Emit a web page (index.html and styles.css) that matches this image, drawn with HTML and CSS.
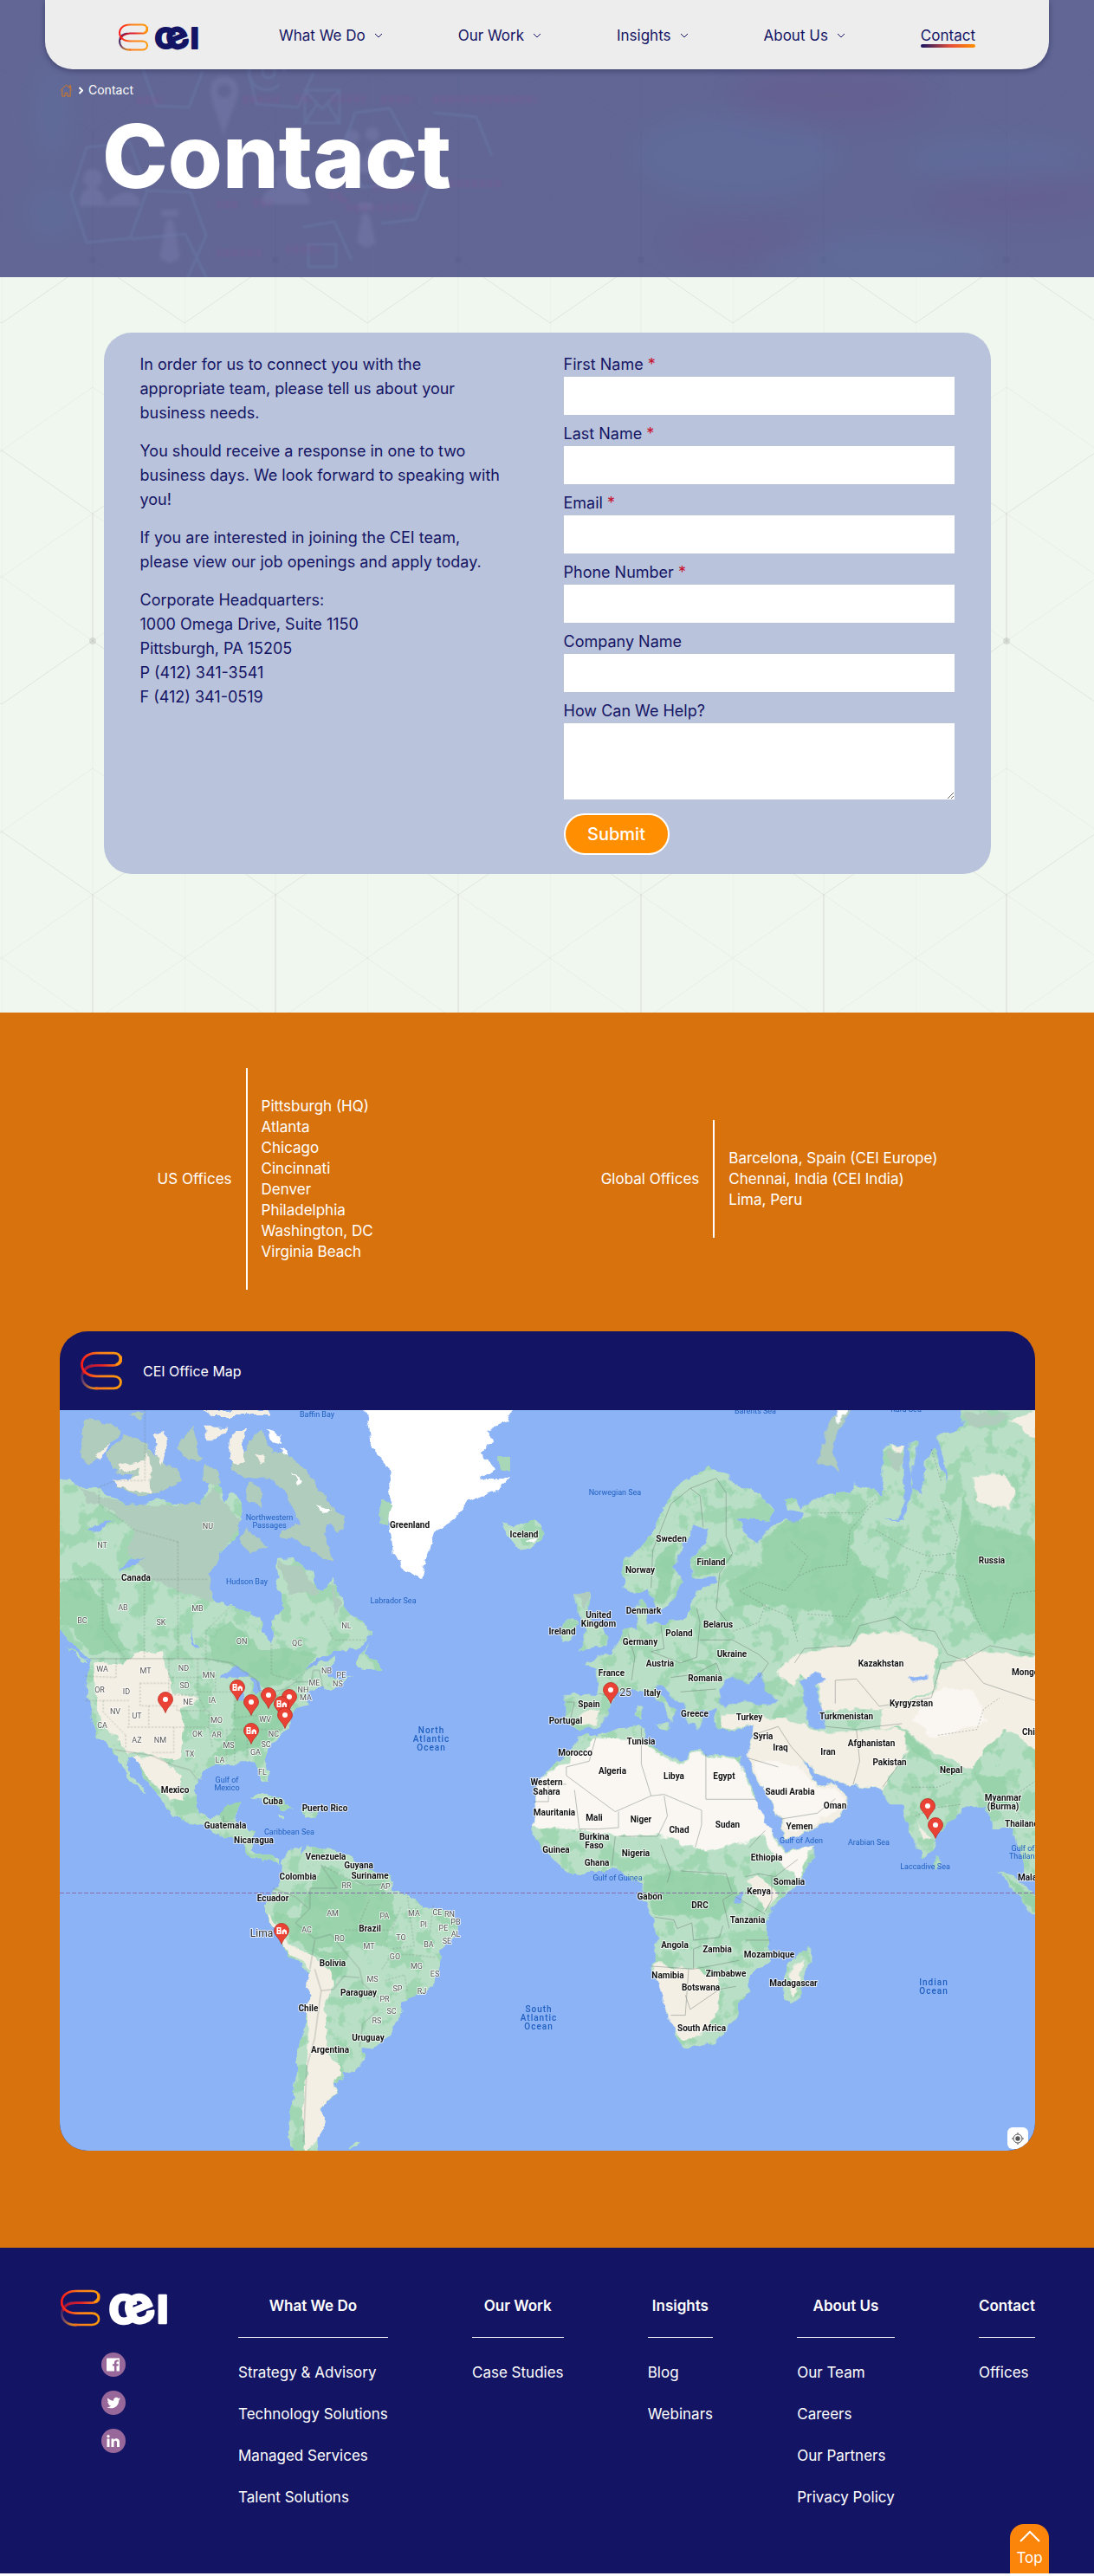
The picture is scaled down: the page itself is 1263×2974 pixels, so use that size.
FILE: index.html
```html
<!DOCTYPE html>
<html lang="en">
<head>
<meta charset="utf-8">
<meta name="viewport" content="width=device-width, initial-scale=1">
<title>Contact | CEI</title>
<link rel="stylesheet" href="styles.css">
</head>
<body>
<svg class="defs" width="0" height="0" aria-hidden="true">
  <defs>
    <linearGradient id="ribbon" x1="0" x2="1" y1="0" y2="0"><stop offset="0" stop-color="#ff1a1a"/><stop offset=".45" stop-color="#fb7d1c"/><stop offset="1" stop-color="#ff9a0a"/></linearGradient>
    <linearGradient id="ribbon-mid" x1="0" x2="1" y1="0" y2="0"><stop offset="0" stop-color="#a3123c"/><stop offset=".5" stop-color="#e3222b"/><stop offset="1" stop-color="#ff8a10"/></linearGradient>
    <linearGradient id="ribbon-tail" x1="0" x2="1" y1="0" y2="1"><stop offset="0" stop-color="#141464"/><stop offset=".4" stop-color="#6b3f6b"/><stop offset="1" stop-color="#ff9a0a"/></linearGradient>
    <symbol id="mark" viewBox="0 0 34 32">
      <g fill="none" stroke-width="2">
        <path stroke="url(#ribbon-tail)" d="M14 30.500C5 31 1 26 1 20C1 15 5 12 10 11.500"/>
        <path stroke="url(#ribbon-mid)" d="M2 19C3 13 8 12 13 11.600H27C34 11.500 34 6 32.500 4"/>
        <path stroke="url(#ribbon)" d="M29 11C34 9 34 1.500 27 1.500H13C-3 1.500 -3 20.500 13 20.500H27C35 20.500 35 30.500 27 30.500H12"/>
      </g>
    </symbol>
    <symbol id="chevron" viewBox="0 0 10 6"><path d="M1 1l4 4 4-4" fill="none" stroke="currentColor"/></symbol>
    <symbol id="pin" viewBox="0 0 18 25"><path d="M9 .5a8.500 8.500 0 0 0-8.500 8.500c0 5.500 6 8 8.500 15.500C11.500 17 17.500 14.500 17.500 9A8.500 8.500 0 0 0 9 .5z" fill="#ea4335" stroke="#b5251c" stroke-width=".7"/></symbol>
    <symbol id="pin-dot" viewBox="0 0 18 25"><use href="#pin"/><circle cx="9" cy="9" r="3" fill="#fff"/></symbol>
    <symbol id="pin-office" viewBox="0 0 18 25"><use href="#pin"/><path fill="#fff" fill-rule="evenodd" d="M3.500 5h5v8h-5zM5 6.500v1.500h2V6.500zM5 9.700v1.600h2V9.700zM9.500 9l2.700-2L15 9v4h-1.800v-2.500h-1.600V13H9.500z"/></symbol>
  </defs>
</svg>

<div class="upper">
  <header class="site-header">
    <a class="logo" href="#" aria-label="CEI home">
      <svg class="logo-svg" viewBox="0 0 94 32"><use href="#mark" width="34" height="32"/><text class="wordmark" x="41 60 82" y="29 33 29" rotate="0 -22 0">ceı</text></svg>
    </a>
    <nav class="main-nav" aria-label="Main">
      <a href="#">What We Do <svg class="chev"><use href="#chevron"/></svg></a>
      <a href="#">Our Work <svg class="chev"><use href="#chevron"/></svg></a>
      <a href="#">Insights <svg class="chev"><use href="#chevron"/></svg></a>
      <a href="#">About Us <svg class="chev"><use href="#chevron"/></svg></a>
      <a href="#" class="current" aria-current="page">Contact</a>
    </nav>
  </header>

  <div class="hero">
    <svg class="hero-art" viewBox="0 0 1263 320" preserveAspectRatio="xMinYMin slice" aria-hidden="true">
      <g class="glow"><ellipse cx="60" cy="130" rx="20" ry="60"/><ellipse cx="60" cy="245" rx="30" ry="32"/><ellipse cx="850" cy="180" rx="120" ry="50"/><ellipse cx="1150" cy="185" rx="110" ry="25"/><ellipse cx="1010" cy="300" rx="140" ry="30"/></g>
      <g class="glow-violet"><ellipse cx="960" cy="110" rx="120" ry="34"/><ellipse cx="860" cy="280" rx="90" ry="22"/><ellipse cx="1180" cy="230" rx="110" ry="26"/></g>
      <g class="ghost-line"><path d="M100 170l50-5 20 55-20 55-50 5-18-55zM152 276l62-6 24 50M170 220l50 2 18 50-22 50M165 80l15 42 38 2 16-42M286 80l10 40 48 4 18-40M410 130l40-5 24 44-16 44-40 3-22-46zM350 262l36-6 20 44M440 258l40-5 20-50M500 130l50 5 18 45"/><path d="M352 104h40v38h-40zM352 104l20 22 20-22M352 142l14-22M392 142l-14-22M356 282h32v26h-32z"/><path d="M322 98a20 20 0 1 1 6-14M310 76a7 7 0 1 0 0 14 7 7 0 0 0 0-14M317 76v12"/></g>
      <g class="ghost-fill"><path fill-rule="evenodd" d="M258 88a15 15 0 0 0-15 16c0 14 9 28 15 54 7-26 17-40 17-54a16 16 0 0 0-17-16zM259 97a8 8 0 1 1 0 16 8 8 0 0 1 0-16z"/><circle cx="107" cy="206" r="11"/><path d="M92 236c0-26 28-26 30 0 18-20 38-18 40 2H92z"/><circle cx="146" cy="200" r="9"/><circle cx="407" cy="158" r="8"/><circle cx="430" cy="155" r="8"/><path d="M390 200c2-40 28-36 30-8 2-32 26-30 30 8zM186 242h20v8h-20zM192 254h8l8 44-12 6-12-6zM414 234h16v8h-16zM418 246h8l8 36-12 4-10-6z"/><circle cx="330" cy="204" r="14"/><path d="M302 236c0-30 56-30 56 0z"/></g>
      <g class="ghost-code"><path d="M158 116h30M280 115h42M340 114h20M382 114h40M440 115h38M500 115h120M250 236h26M292 234h22M380 226h16v8M430 216h58M400 240h80M500 212h80M250 292h54M330 288h40"/></g>
    </svg>
    <nav class="crumbs" aria-label="Breadcrumb">
      <a href="#" aria-label="Home"><svg class="home" viewBox="0 0 16 16"><path d="M1 8L8 1l7 7M3 7v8h3.500v-4h3v4H13V7M12 4V2h1.500v3.500" fill="none" stroke="currentColor"/></svg></a>
      <svg class="sep" viewBox="0 0 6 9"><path d="M1.500 1L5 4.500 1.500 8" fill="none" stroke="currentColor" stroke-width="2"/></svg>
      <span>Contact</span>
    </nav>
    <h1>Contact</h1>
  </div>

  <main class="contact">
    <div class="card">
      <div class="intro">
        <p>In order for us to connect you with the appropriate team, please tell us about your business needs.</p>
        <p>You should receive a response in one to two business days. We look forward to speaking with you!</p>
        <p>If you are interested in joining the CEI team, please view our job openings and apply today.</p>
        <p>Corporate Headquarters:<br>1000 Omega Drive, Suite 1150<br>Pittsburgh, PA 15205<br>P (412) 341-3541<br>F (412) 341-0519</p>
      </div>
      <form class="form" action="#">
        <div class="field"><label for="first">First Name <span class="req">*</span></label><input id="first" type="text" required></div>
        <div class="field"><label for="last">Last Name <span class="req">*</span></label><input id="last" type="text" required></div>
        <div class="field"><label for="email">Email <span class="req">*</span></label><input id="email" type="email" required></div>
        <div class="field"><label for="phone">Phone Number <span class="req">*</span></label><input id="phone" type="tel" required></div>
        <div class="field"><label for="company">Company Name</label><input id="company" type="text"></div>
        <div class="field"><label for="help">How Can We Help?</label><textarea id="help"></textarea></div>
        <button class="submit" type="submit">Submit</button>
      </form>
    </div>
  </main>
</div>

<section class="offices">
  <div class="office-lists">
    <div class="office-group"><h2>US Offices</h2><ul><li>Pittsburgh (HQ)</li><li>Atlanta</li><li>Chicago</li><li>Cincinnati</li><li>Denver</li><li>Philadelphia</li><li>Washington, DC</li><li>Virginia Beach</li></ul></div>
    <div class="office-group"><h2>Global Offices</h2><ul><li>Barcelona, Spain (CEI Europe)</li><li>Chennai, India (CEI India)</li><li>Lima, Peru</li></ul></div>
  </div>

  <div class="map-card">
    <div class="map-head"><svg class="map-mark"><use href="#mark"/></svg><span>CEI Office Map</span></div>
    <div class="map-body">
    <svg class="map" viewBox="0 0 1126 855" role="img" aria-label="World map of CEI offices">
      <defs>
        <filter id="coast" x="-2%" y="-2%" width="104%" height="104%" color-interpolation-filters="sRGB">
          <feTurbulence type="fractalNoise" baseFrequency=".07" numOctaves="3" seed="4" result="n"/>
          <feDisplacementMap in="SourceGraphic" in2="n" scale="11" xChannelSelector="R" yChannelSelector="G"/>
        </filter>
        <filter id="terrain" x="-2%" y="-2%" width="104%" height="104%" color-interpolation-filters="sRGB">
          <feTurbulence type="fractalNoise" baseFrequency=".07" numOctaves="3" seed="4" result="n"/>
          <feDisplacementMap in="SourceGraphic" in2="n" scale="11" xChannelSelector="R" yChannelSelector="G" result="land"/>
          <feTurbulence type="fractalNoise" baseFrequency=".045" numOctaves="5" seed="9"/>
          <feColorMatrix values="0 0 0 0 .63  0 0 0 0 .84  0 0 0 0 .7  12 0 0 0 -6.200"/>
          <feComposite in2="land" operator="in" result="forest"/>
          <feMerge><feMergeNode in="land"/><feMergeNode in="forest"/></feMerge>
        </filter>
      </defs>
      <rect width="1126" height="856" fill="#8bb3f5"/>

      <g filter="url(#terrain)" fill="#b9e0c6">
        <g transform="translate(-9 -8) scale(.3699 .3333)">
          <path d="M0 270L60 255 75 290 120 290 150 300 190 330 230 355 290 350 340 330 400 355 470 350 490 280 520 270 540 340 560 300 585 340 590 400 570 430 585 450 560 480 520 530 490 590 488 640 515 690 560 700 650 745 655 795 683 835 695 800 690 750 722 715 720 670 698 645 710 605 700 540 750 533 790 570 812 590 820 640 840 655 862 630 877 600 895 650 915 710 960 755 992 790 990 820 950 850 880 860 830 885 790 925 830 905 880 880 885 895 850 920 862 945 900 960 935 945 880 990 855 1000 845 985 800 1000 790 1020 800 1045 765 1055 745 1085 730 1130 725 1145 685 1185 660 1225 678 1280 675 1315 655 1300 640 1260 625 1240 580 1240 560 1255 510 1250 470 1275 455 1300 445 1370 460 1420 490 1435 530 1430 545 1390 588 1382 575 1430 565 1465 610 1470 635 1480 630 1540 650 1570 690 1560 715 1580 710 1602 690 1584 665 1592 640 1580 605 1555 590 1520 540 1500 520 1490 480 1465 440 1455 370 1430 345 1385 325 1350 290 1300 255 1225 228 1220 250 1290 295 1355 270 1340 240 1300 225 1260 195 1200 145 1160 120 1070 105 1010 105 950 118 890 70 840 45 800 0 770z"/>
          <path d="M990 830L975 870 1020 900 1032 930 950 912 965 870zM50 845L112 895 95 893zM620 1372L650 1353 700 1370 752 1405 720 1407 680 1383zM780 1406L830 1410 825 1432 785 1436zM703 1428h26v10h-26zM1405 410L1430 430 1500 405 1540 450 1500 505 1450 500 1425 475z"/>
          <path d="M780 1525L770 1560 800 1530 830 1545 900 1555 930 1570 960 1610 1055 1640 1068 1690 1110 1705 1145 1735 1225 1755 1265 1790 1270 1830 1215 1890 1210 1960 1190 2020 1145 2050 1090 2080 1085 2130 1045 2195 1010 2240 960 2235 980 2275 960 2305 905 2310 910 2345 875 2350 888 2390 840 2440 860 2485 825 2540 830 2600 760 2600 740 2530 745 2450 760 2350 765 2250 790 2180 795 2100 805 1970 740 1920 700 1830 665 1770 665 1740 690 1690 715 1640 720 1590 735 1560z"/>
          <path d="M925 2580L945 2565 968 2563 950 2580z"/>
        </g>
        <g transform="translate(551 -8) scale(.37627 .3333)">
          <path d="M85 1010L190 1010 185 920 145 900 180 880 230 860 270 790 310 780 305 710 325 680 335 700 335 760 380 765 460 745 480 680 490 650 555 620 550 605 480 605 470 540 520 480 520 430 480 430 420 560 440 620 410 700 370 715 345 640 290 665 265 640 265 545 340 480 380 380 410 310 480 250 530 225 590 250 600 280 680 310 725 370 710 410 650 400 615 392 640 450 680 485 710 430 760 405 800 415 820 380 770 370 760 330 795 330 805 370 880 315 960 310 975 280 1030 300 1060 330 1055 200 1080 135 1130 150 1125 230 1130 340 1110 400 1060 405 1125 405 1150 320 1145 130 1165 130 1145 280 1185 320 1190 200 1220 160 1260 280 1250 180 1230 110 1310 85 1300 0 1560 0 1560 1660 1510 1640 1490 1600 1475 1520 1460 1470 1400 1470 1380 1400 1310 1400 1280 1440 1230 1490 1220 1540 1185 1580 1155 1510 1130 1440 1125 1390 1085 1390 1050 1330 940 1320 850 1270 815 1235 860 1325 915 1315 960 1370 935 1430 860 1470 760 1515 750 1450 700 1340 645 1240 650 1220 660 1150 665 1120 600 1135 560 1130 540 1100 550 1060 500 1060 510 1090 490 1130 460 1090 440 1040 380 970 360 970 370 1000 430 1060 410 1110 385 1040 320 990 290 990 240 1000 235 1040 190 1120 130 1135 90 1110z"/>
          <path d="M120 660L165 650 155 740 215 800 215 840 130 860 150 790 125 720zM75 830L70 790 95 745 125 755 115 820zM360 1105L405 1105 400 1135zM305 1050L322 1048 320 1095 306 1090zM830 1880L842 1920 805 2060 780 2080 755 2060 765 1940 800 1920zM1222 1560L1240 1590 1225 1612zM1415 1620L1460 1640 1560 1740 1560 1800 1490 1730z"/>
          <path d="M130 1150L185 1150 250 1125 335 1122 330 1180 400 1220 450 1240 470 1200 520 1215 600 1225 628 1222 620 1250 660 1330 690 1440 745 1525 760 1550 850 1530 850 1570 800 1660 720 1750 700 1800 715 1850 715 1930 645 1990 650 2040 615 2080 610 2130 550 2210 450 2232 430 2200 420 2150 395 2110 385 2040 350 1950 370 1880 355 1780 325 1720 320 1665 240 1610 100 1635 60 1590 10 1540-10 1500-15 1470-5 1400-8 1340 20 1290 50 1250 75 1230 115 1190z"/>
        </g>
      </g>

      <g filter="url(#coast)">
        <g transform="translate(-9 -8) scale(.3699 .3333)">
          <g fill="#93d0a6" opacity=".8"><path d="M24 620L90 600 170 700 200 800 250 860 120 870 60 780 24 760z"/><path d="M490 800L560 760 650 850 690 850 830 870 790 930 740 960 660 985 580 920 500 890z"/><path d="M570 1030L700 1000 740 1060 700 1160 620 1200 500 1230 560 1130z"/><path d="M770 1790L820 1640 850 1600 930 1650 1060 1700 1070 1790 1040 1880 900 1860 820 1900 750 1860 690 1760z"/><path d="M820 1900L930 1900 880 2010 865 1960z"/><path d="M545 1390L588 1382 570 1440 520 1450z"/></g>
          <g fill="#b0ccbc"><path d="M75 290L230 355 290 350 400 355 470 350 500 290 585 400 570 450 520 530 490 590 500 680 420 660 300 600 230 500 260 450 200 380 110 330z"/><path d="M705 545L780 570 830 660 740 660zM875 610L900 690 880 740z"/><path d="M560 225L600 160 630 110 655 95 690 170 740 180 800 240 830 300 880 360 915 400 900 450 870 420 850 440 880 550 830 530 790 490 760 475 705 465 720 440 770 420 750 360 720 310 690 260 600 260z"/><path d="M100 60L150 55 215 100 160 160 125 215 85 185zM170 170L230 110 290 140 330 180 380 230 405 270 350 300 280 320 205 290 250 250 185 230zM390 150L440 80 465 190 430 205zM470 200L520 240 520 280 470 275zM600 430L625 450 670 500 620 515 590 490zM235 45L290 24 270 55zM610 280L650 290 655 360 610 330z"/></g>
          <g fill="#f4efe5"><path d="M130 900L220 910 270 860 340 870 370 960 380 1010 470 1010 400 1060 410 1130 400 1230 380 1240 310 1220 230 1200 200 1160 150 1110 135 1000z"/><path d="M250 1225L330 1225 400 1290 410 1380 370 1370 320 1320z"/><path d="M195 260L270 260 300 170 310 310 210 290zM200 215L290 200 290 230 210 235zM315 110L355 95 350 180 340 215zM550 190L560 110 580 90 607 90 590 140 600 210 570 210zM480 80L545 80 520 130 485 130zM470 24L670 24 680 45 500 45zM630 170L670 180 660 210zM130 180L180 140 150 200z"/><path d="M805 1960L740 1910 700 1830 670 1770 690 1780 740 1870 810 1910 870 1960 875 2010 850 2100 860 2240 905 2330 875 2350 885 2390 840 2440 860 2485 820 2560 790 2600 780 2480 795 2300 800 2200 795 2100z"/></g>
          <g fill="#fff"><path d="M975 0L1000 150 1050 220 1060 330 1045 350 1055 420 1065 520 1095 580 1155 612 1170 540 1195 450 1230 420 1270 390 1300 340 1380 310 1425 262 1340 260 1390 230 1330 180 1380 130 1350 100 1420 60 1450 0z"/><path d="M670 95L715 110 720 135 685 125zM745 240L785 270 770 280zM710 150L740 180 725 185zM820 350L870 370 860 390zM1480 475L1515 462 1505 490z"/></g>
          <path fill="#a8d7b8" d="M1025 340L1058 350 1050 420 1025 420zM1395 180L1430 190 1430 240 1400 230z"/>
          <path fill="#8bb3f5" d="M520 950L570 915 620 935 610 950zM580 1030L590 970 600 980 595 1030zM615 950L645 960 650 1000 635 1010zM432 780L445 830 455 850 440 850zM205 580L250 540 290 530 240 575zM110 440L190 400 150 450z"/>
        </g>
        <g transform="translate(551 -8) scale(.37627 .3333)">
          <g fill="#93d0a6" opacity=".85"><path d="M690 470L760 410 900 390 980 420 960 500 1010 570 1100 640 1000 700 940 800 900 720 700 700 600 700 580 620 690 560z"/><path d="M1310 300L1340 420 1528 470 1560 780 1400 830 1310 700 1280 560z"/><path d="M480 540L560 490 600 530 560 590 480 600zM370 520L430 480 420 600 400 690 360 690zM420 880L540 900 550 930 500 910z"/><path d="M325 1640L440 1620 600 1640 620 1700 560 1790 370 1770 325 1710z"/><path d="M1340 1280L1440 1290 1440 1400 1380 1370zM1120 1120L1220 1230 1320 1290 1250 1280 1130 1190z"/><path d="M1430 1630L1560 1740 1560 1790 1490 1720z"/></g>
          <g fill="#f4efe5"><path d="M730 930L800 870 960 840 1000 800 1130 790 1230 850 1220 930 1210 1000 1060 1060 880 1060 860 980 810 930 790 980 740 950z"/><path d="M1240 930L1340 860 1560 880 1560 1220 1440 1130 1380 1190 1330 1270 1200 1200 1130 1120 1060 1130 1060 1060 1210 1010z"/><path d="M570 1075L740 1090 800 1110 880 1140 1060 1130 1130 1130 1130 1210 1060 1330 940 1320 850 1270 815 1235 860 1325 915 1315 960 1370 935 1430 860 1470 760 1515 750 1450 700 1340 645 1240 665 1120 570 1130z"/><path d="M1340 260L1420 240 1470 300 1450 370 1350 340zM1150 1390L1170 1470 1210 1500 1180 1520zM130 1075L190 1060 180 1110 130 1120zM1080 140L1130 150 1110 190zM1450 60L1528 30 1528 120z"/><path d="M355 1940L470 1960 560 1990 560 2100 500 2200 440 2200 395 2110z"/><path d="M680 1640L740 1700 705 1760 640 1650zM775 1960L820 1930 800 2040 780 2060z"/></g>
          <path fill="#faf7f2" d="M90 1240L180 1160 320 1165 325 1190 400 1230 450 1250 470 1210 600 1235 620 1250 680 1400 735 1520 760 1555 850 1530 800 1650 740 1590 690 1490 640 1520 520 1550 380 1500 250 1500 100 1475-15 1470-5 1400-8 1340 20 1290z"/>
          <path fill="#faf7f2" d="M660 1240L800 1250 860 1330 915 1330 950 1380 860 1455 770 1480 700 1340zM1240 980L1340 1000 1380 1100 1220 1160 1150 1100z"/>
          <path fill="#b0ccbc" d="M865 200L890 80 925 40 965 20 915 110 905 180 930 240zM1080 160L1130 190 1110 240 1080 220zM1310 30L1460 40 1400 80 1320 80zM120 660L165 650 150 720z"/>
          <path fill="#fff" d="M915 60L925 20 960 10 925 70z"/>
          <path fill="#8bb3f5" d="M560 1040L570 960 600 940 640 970 690 940 700 990 735 1020 720 1045 640 1035 580 1050zM805 960L860 930 890 950 850 980 870 1030 885 1070 885 1135 830 1115 825 1040zM1140 950L1200 935 1200 950 1150 965zM605 1700L632 1695 630 1730 605 1730z"/>
        </g>
      </g>

      <g class="border">
        <g transform="translate(-9 -8) scale(.3699 .3333)">
          <path d="M118 885H480L560 900 640 960 650 1010 730 990 760 965 810 965 815 925 835 925 845 985M195 1200L310 1220 380 1255 430 1270 455 1305M535 1430V1450L570 1450M840 1600L890 1680 840 1680 805 1680 805 1750 760 1800 820 1855 870 1840 930 1920 960 1960 970 2010 1020 2060M805 1960L820 1860M820 1960L840 2035 880 2030 910 1985 960 1990M840 2035L820 2200 795 2300 785 2560M1020 2100L970 2150 960 2230M690 1680L760 1710 800 1750M940 1650L980 1670 1060 1665"/>
          <path class="dash" d="M24 610H488M158 610V780L230 885M288 610V885M393 480V885M480 885V790L560 700M393 480L260 440 147 350 147 290 200 268H290V24M685 835V940L760 960 830 890M840 740L880 820H980M365 885V1010H460M365 950H460M455 885V1010L480 1065M275 970H365M275 970V1048H390V1065H490M105 945L200 950M200 885V950M105 1030H240M160 1030V1070L230 1150M240 1048V1122M302 1048V1122M235 1122H490M380 1122V1210H310M230 1150V1200M490 1065V1122L500 1190M510 940V1000H570M460 1000H510M570 1030V1090L650 1080M555 1130H720M545 1130V1240M570 1150V1240M610 1130V1230M840 1600L930 1650M960 1800L990 1720M915 1825H1060L1090 1740M1110 1710L1130 1880 1060 1890M1030 1960L1060 1910 1120 1910 1200 1920M1040 2000L1100 1980 1110 2040M1190 1740L1180 1830"/>
        </g>
        <g transform="translate(551 -8) scale(.37627 .3333)">
          <path d="M350 640L355 510 410 350 470 295 500 320 510 430M470 295L550 260 580 310 580 460 600 520 560 590 550 710 600 780M190 1005L240 1020M280 800L300 880 290 960M380 770L390 850 350 860 440 900 490 880 500 760 490 710M500 820L600 820 680 870 710 900 680 950M90 1035L115 1035 100 1105M410 950L480 940 550 900 570 960M440 1000L550 990M320 1125L320 1250 350 1360 240 1415 90 1290 90 1260 160 1240 180 1160M518 1215V1372H670M350 1360L390 1355 505 1410 505 1460 485 1540M250 1415V1470L190 1475 130 1475 115 1340M390 1360L400 1430 370 1500 250 1500M-10 1380H35V1320H90M230 1600L240 1500M400 1660L410 1620 380 1530M440 1620L580 1630 600 1700 570 1720 590 1820M360 1780L420 1790 430 1820 475 1800 480 1860 560 1850 570 1810M350 1950L480 1960 530 1950 620 1930M480 1960V1890L505 1880M465 1960L455 2120 410 2120M455 2050L470 2100 560 2030 610 2020M640 1640L680 1630 730 1640 800 1580M720 1640V1720L700 1760M610 1710L700 1770M640 1860H715M650 1540L700 1480M660 1150L740 1120 780 1190 820 1240M650 1230L740 1260M750 1440L860 1420 915 1370M885 1120L980 1130 1040 1120 1120 1110M980 1130L990 1240 970 1320M1060 1330L1130 1220M915 1040V960L980 955 1050 1050 1210 1020 1240 900 1310 890 1390 840 1528 870M1310 890L1370 970 1528 1030M790 900L820 850 960 840 990 770 1100 740 1150 780 1220 790 1260 870 1310 890"/>
          <path class="dash" d="M600 790L680 760 700 700 620 650 680 620 760 650 800 600 860 570 950 560 960 440 1030 350M870 380H990L1040 330M780 480L830 530 800 600M1040 440L1130 500 1200 530 1280 520 1290 460 1240 330M1210 160L1240 270M1030 600L1050 680 1160 640 1180 580 1310 600 1340 720 1370 800M830 730L950 740 990 660M690 700L780 740 800 830M1528 650L1460 660 1430 780M1230 1150L1350 1130 1370 1060 1420 1020M1150 1330L1230 1330 1270 1310M1160 1430L1230 1400 1300 1390M1540 1300L1450 1370 1500 1460"/>
        </g>
      </g>
      <path d="M0 557.500H1126" stroke="#8a6da8" stroke-dasharray="5 2"/>

      <g class="lbl">
        <text x="404" y="132">Greenland</text><text x="536" y="143">Iceland</text><text x="88" y="193">Canada</text><text x="133" y="438">Mexico</text><text x="246" y="451">Cuba</text><text x="306" y="459">Puerto Rico</text><text x="191" y="479">Guatemala</text><text x="224" y="496">Nicaragua</text><text x="307" y="515">Venezuela</text><text x="345" y="525">Guyana</text><text x="358" y="537">Suriname</text><text x="275" y="538">Colombia</text><text x="246" y="563">Ecuador</text><text x="358" y="598">Brazil</text><text x="315" y="638">Bolivia</text><text x="345" y="672">Paraguay</text><text x="287" y="690">Chile</text><text x="356" y="724">Uruguay</text><text x="312" y="738">Argentina</text>
        <text x="706" y="148">Sweden</text><text x="752" y="175">Finland</text><text x="670" y="184">Norway</text><text x="674" y="231">Denmark</text><text x="622" y="236">United</text><text x="622" y="246">Kingdom</text><text x="580" y="255">Ireland</text><text x="715" y="257">Poland</text><text x="760" y="247">Belarus</text><text x="670" y="267">Germany</text><text x="776" y="281">Ukraine</text><text x="693" y="292">Austria</text><text x="637" y="303">France</text><text x="745" y="309">Romania</text><text x="684" y="326">Italy</text><text x="611" y="339">Spain</text><text x="584" y="358">Portugal</text><text x="733" y="350">Greece</text><text x="796" y="354">Turkey</text><text x="812" y="376">Syria</text><text x="832" y="389">Iraq</text><text x="887" y="394">Iran</text><text x="671" y="382">Tunisia</text><text x="595" y="395">Morocco</text><text x="638" y="416">Algeria</text><text x="709" y="422">Libya</text><text x="767" y="422">Egypt</text><text x="948" y="292">Kazakhstan</text><text x="908" y="353">Turkmenistan</text><text x="983" y="338">Kyrgyzstan</text><text x="937" y="384">Afghanistan</text><text x="958" y="406">Pakistan</text><text x="1029" y="415">Nepal</text><text x="1076" y="173">Russia</text>
        <text x="562" y="429">Western</text><text x="562" y="440">Sahara</text><text x="571" y="464">Mauritania</text><text x="617" y="470">Mali</text><text x="671" y="472">Niger</text><text x="715" y="484">Chad</text><text x="771" y="478">Sudan</text><text x="843" y="440">Saudi Arabia</text><text x="895" y="456">Oman</text><text x="854" y="480">Yemen</text><text x="617" y="492">Burkina</text><text x="617" y="502">Faso</text><text x="573" y="507">Guinea</text><text x="620" y="522">Ghana</text><text x="665" y="511">Nigeria</text><text x="816" y="516">Ethiopia</text><text x="842" y="544">Somalia</text><text x="807" y="555">Kenya</text><text x="681" y="561">Gabon</text><text x="739" y="571">DRC</text><text x="794" y="588">Tanzania</text><text x="710" y="617">Angola</text><text x="759" y="622">Zambia</text><text x="819" y="628">Mozambique</text><text x="769" y="650">Zimbabwe</text><text x="702" y="652">Namibia</text><text x="740" y="666">Botswana</text><text x="847" y="661">Madagascar</text><text x="741" y="713">South Africa</text><text x="1089" y="447">Myanmar</text><text x="1089" y="457">(Burma)</text>
        <g class="from-left"><text x="1099" y="302">Mongolia</text><text x="1111" y="371">China</text><text x="1091" y="477">Thailand</text><text x="1106" y="539">Malaysia</text></g>
      </g>
      <g class="lbl region">
        <text x="171" y="134">NU</text><text x="49" y="156">NT</text><text x="73" y="228">AB</text><text x="26" y="243">BC</text><text x="117" y="245">SK</text><text x="159" y="229">MB</text><text x="210" y="267">ON</text><text x="274" y="269">QC</text><text x="331" y="249">NL</text><text x="49" y="299">WA</text><text x="46" y="323">OR</text><text x="77" y="325">ID</text><text x="99" y="301">MT</text><text x="143" y="298">ND</text><text x="144" y="318">SD</text><text x="172" y="306">MN</text><text x="148" y="337">NE</text><text x="176" y="335">IA</text><text x="64" y="348">NV</text><text x="89" y="353">UT</text><text x="49" y="364">CA</text><text x="89" y="381">AZ</text><text x="116" y="381">NM</text><text x="159" y="374">OK</text><text x="181" y="375">AR</text><text x="181" y="358">MO</text><text x="195" y="387">MS</text><text x="150" y="397">TX</text><text x="185" y="404">LA</text><text x="226" y="395">GA</text><text x="238" y="386">SC</text><text x="247" y="374">NC</text><text x="237" y="357">WV</text><text x="234" y="418">FL</text><text x="294" y="315">ME</text><text x="308" y="301">NB</text><text x="325" y="306">PE</text><text x="321" y="316">NS</text><text x="281" y="323">NH</text><text x="284" y="332">MA</text>
        <text x="331" y="549">RR</text><text x="376" y="550">AP</text><text x="315" y="581">AM</text><text x="375" y="584">PA</text><text x="409" y="581">MA</text><text x="436" y="580">CE</text><text x="450" y="582">RN</text><text x="457" y="591">PB</text><text x="443" y="598">PE</text><text x="420" y="594">PI</text><text x="457" y="605">AL</text><text x="447" y="613">SE</text><text x="426" y="617">BA</text><text x="394" y="609">TO</text><text x="285" y="600">AC</text><text x="323" y="610">RO</text><text x="357" y="619">MT</text><text x="387" y="631">GO</text><text x="412" y="642">MG</text><text x="433" y="651">ES</text><text x="418" y="671">RJ</text><text x="390" y="668">SP</text><text x="361" y="657">MS</text><text x="375" y="680">PR</text><text x="383" y="694">SC</text><text x="366" y="705">RS</text>
      </g>
      <g class="lbl water">
        <text x="297" y="5">Baffin Bay</text><text x="242" y="124">Northwestern</text><text x="242" y="133">Passages</text><text x="216" y="198">Hudson Bay</text><text x="385" y="220">Labrador Sea</text><text x="193" y="427">Gulf of</text><text x="193" y="436">Mexico</text><text x="265" y="487">Caribbean Sea</text><text x="641" y="95">Norwegian Sea</text><text x="803" y="1">Barents Sea</text><text x="977" y="-1">Kara Sea</text><text x="856" y="497">Gulf of Aden</text><text x="934" y="499">Arabian Sea</text><text x="999" y="527">Laccadive Sea</text><text x="644" y="540">Gulf of Guinea</text><text x="1112" y="506">Gulf of</text><g class="from-left"><text x="1096" y="515">Thailand</text></g>
      </g>
      <g class="lbl water ocean">
        <text x="429" y="369">North</text><text x="429" y="379">Atlantic</text><text x="429" y="389">Ocean</text><text x="553" y="691">South</text><text x="553" y="701">Atlantic</text><text x="553" y="711">Ocean</text><text x="1009" y="660">Indian</text><text x="1009" y="670">Ocean</text>
      </g>
      <g class="lbl city"><text x="233" y="604">Lima</text><text x="653" y="326">25</text></g>
      <g>
        <use href="#pin-dot" x="113" y="325" width="18" height="25"/><use href="#pin-office" x="196" y="311" width="18" height="25"/><use href="#pin-dot" x="212" y="328" width="18" height="25"/><use href="#pin-dot" x="232" y="320" width="18" height="25"/><use href="#pin-dot" x="256" y="322" width="18" height="25"/><use href="#pin-office" x="247" y="330" width="18" height="25"/><use href="#pin-dot" x="251" y="343" width="18" height="25"/><use href="#pin-office" x="212" y="361" width="18" height="25"/><use href="#pin-office" x="247" y="592" width="18" height="25"/><use href="#pin-dot" x="627" y="314" width="18" height="25"/><use href="#pin-dot" x="993" y="448" width="18" height="25"/><use href="#pin-dot" x="1002" y="470" width="18" height="25"/>
      </g>
    </svg>
    <button class="locate" type="button" aria-label="Show my location"><svg viewBox="0 0 16 16"><circle cx="8" cy="8" r="5" fill="none" stroke="#555"/><circle cx="8" cy="8" r="2.700" fill="#555"/><path d="M8 1v2M8 13v2M1 8h2M13 8h2" stroke="#555"/></svg></button>
    </div>
  </div>
</section>

<footer class="footer">
  <div class="brand">
    <a href="#" aria-label="CEI home"><svg class="footer-logo" viewBox="0 0 94 32"><use href="#mark" width="34" height="32"/><text class="wordmark light" x="41 60 82" y="29 33 29" rotate="0 -22 0">ceı</text></svg></a>
    <div class="social">
      <a href="#" aria-label="Facebook"><svg viewBox="0 0 28 28"><path fill="#fff" fill-rule="evenodd" d="M7 6.500h14v15h-3.500v-6h2l.3-2.300h-2.300v-1.400c0-.8.3-1.200 1.200-1.200h1.200V8.500c-3-.4-4.900.4-4.900 3v1.700h-2v2.300h2v6H7a1 1 0 0 1-1-1v-13a1 1 0 0 1 1-1z"/></svg></a>
      <a href="#" aria-label="Twitter"><svg viewBox="0 0 28 28"><path fill="#fff" d="M22 9.300c-.6.300-1.200.4-1.800.5.700-.4 1.100-1 1.400-1.700-.6.400-1.300.6-2 .8a3.200 3.200 0 0 0-5.500 2.900c-2.700-.1-5-1.400-6.600-3.300-.9 1.500-.4 3.300 1 4.300-.5 0-1-.2-1.400-.4 0 1.500 1.100 2.800 2.500 3.100-.5.100-1 .1-1.400 0 .4 1.300 1.600 2.200 3 2.200A6.500 6.500 0 0 1 6.400 19c5.700 3.500 14-.2 13.900-8.100.7-.4 1.200-1 1.700-1.600z"/></svg></a>
      <a href="#" aria-label="LinkedIn"><svg viewBox="0 0 28 28"><path fill="#fff" d="M6.500 11.500h3V21h-3zM8 7a1.700 1.700 0 1 1 0 3.400A1.700 1.700 0 0 1 8 7zM11.500 11.500h2.900v1.300c1.200-2.300 6.600-2.300 6.600 2.200v6h-3v-5.200c0-2.700-3.500-2.500-3.500 0V21h-3z"/></svg></a>
    </div>
  </div>
  <div class="footer-cols">
    <div class="col"><h3>What We Do</h3><ul><li><a href="#">Strategy &amp; Advisory</a></li><li><a href="#">Technology Solutions</a></li><li><a href="#">Managed Services</a></li><li><a href="#">Talent Solutions</a></li></ul></div>
    <div class="col"><h3>Our Work</h3><ul><li><a href="#">Case Studies</a></li></ul></div>
    <div class="col"><h3>Insights</h3><ul><li><a href="#">Blog</a></li><li><a href="#">Webinars</a></li></ul></div>
    <div class="col"><h3>About Us</h3><ul><li><a href="#">Our Team</a></li><li><a href="#">Careers</a></li><li><a href="#">Our Partners</a></li><li><a href="#">Privacy Policy</a></li></ul></div>
    <div class="col"><h3>Contact</h3><ul><li><a href="#">Offices</a></li></ul></div>
  </div>
  <a class="to-top" href="#"><svg viewBox="0 0 24 14"><path d="M1 13L12 2l11 11" fill="none" stroke="currentColor" stroke-width="2"/></svg>Top</a>
</footer>
</body>
</html>
```

FILE: styles.css
```css
:root {
  --navy: #141464;
  --orange: #d7720d;
  --bright: #ff8f00;
}

* { box-sizing: border-box; }

body {
  margin: 0;
  padding-bottom: 1px;
  font-family: Inter, "Open Sans", sans-serif;
  font-size: 17px;
  line-height: 24px;
  color: var(--navy);
  background: #fff;
}

a { color: inherit; text-decoration: none; }
ul { list-style: none; margin: 0; padding: 0; }
svg { display: block; }
.defs { position: absolute; }

/* Upper area: header, hero and form share one hexagon pattern */
.upper {
  background-color: #f0f7ee;
  background-image: url("data:image/svg+xml,%3Csvg xmlns='http://www.w3.org/2000/svg' width='211' height='440'%3E%3Cg fill='none' stroke='%23141414'%3E%3Cpath stroke-opacity='.04' d='M0 0V440M105 0V440M0 226L105 153L211 226M0 226L105 300L211 226M0 80L105 7L211 80'/%3E%3Cpath stroke-opacity='.08' d='M0 80L105 153L211 80M105 153V300L0 373M105 300L211 373'/%3E%3C/g%3E%3Ccircle cx='105' cy='300' r='4' fill='%23141414' fill-opacity='.1'/%3E%3C/svg%3E");
  background-position: 2px 0;
}

.site-header {
  position: relative;
  z-index: 1;
  display: flex;
  align-items: center;
  gap: 91px;
  height: 80px;
  margin: 0 52px;
  padding: 2px 85px 0;
  background: #ededed;
  border-radius: 0 0 32px 32px;
  box-shadow: 0 2px 6px rgba(20, 20, 60, .4);
}

.logo { padding-top: 4px; }
.logo-svg { width: 94px; height: 32px; overflow: visible; }
.wordmark {
  font-family: Inter, sans-serif;
  font-size: 44px;
  font-weight: 600;
  fill: var(--navy);
  stroke: var(--navy);
  stroke-width: 2px;
  stroke-linejoin: round;
}
.wordmark.light { fill: #fff; stroke: #fff; }

.main-nav {
  flex: 1;
  display: flex;
  justify-content: space-between;
}
.main-nav a { display: flex; align-items: center; gap: 10px; }
.chev { width: 10px; height: 6px; }
.main-nav .current { position: relative; }
.main-nav .current::after {
  content: "";
  position: absolute;
  left: 0;
  right: 0;
  bottom: -2px;
  height: 4px;
  border-radius: 2px;
  background: linear-gradient(90deg, var(--navy), #e8503a 55%, var(--bright));
}

.hero {
  position: relative;
  height: 320px;
  margin-top: -80px;
  padding: 92px 69px 0;
  color: #fff;
  background: rgba(72, 76, 132, .85);
}
.hero-art { position: absolute; inset: 0; width: 100%; height: 100%; }
.glow { fill: #5f78a8; opacity: .3; filter: blur(16px); }
.glow-violet { fill: #6b558c; opacity: .3; filter: blur(16px); }
.ghost-line { fill: none; stroke: #6d80b0; stroke-width: 3px; opacity: .4; filter: blur(1px); }
.ghost-fill { fill: #7c80b2; opacity: .4; filter: blur(2px); }
.ghost-code { fill: none; stroke: #7d5c96; stroke-width: 9px; stroke-dasharray: 6 3; opacity: .4; filter: blur(2px); }

.crumbs {
  position: relative;
  display: flex;
  align-items: center;
  gap: 6px;
  font-size: 14px;
}
.home { width: 15px; height: 15px; color: #e07a18; }
.sep { width: 6px; height: 9px; }

h1 {
  position: relative;
  margin: 4px 0 0 49px;
  font-size: 102px;
  line-height: 120px;
  font-weight: 800;
}

.contact { padding: 64px 24px 160px; }
.card {
  display: grid;
  grid-template-columns: 1fr 1fr;
  gap: 38px;
  max-width: 1024px;
  margin: 0 auto;
  padding: 23px 42px 22px;
  font-size: 18px;
  line-height: 28px;
  background: #b9c3db;
  border-radius: 32px;
}
.intro { padding-right: 30px; }
.intro p { margin: 0 0 16px; }

.field { margin-bottom: 8px; }
.field label { display: block; }
.req { color: #c8102e; }
.field input,
.field textarea {
  display: block;
  width: 100%;
  height: 44px;
  padding: 8px;
  border: 0;
  border-radius: 0;
  font: inherit;
  background: #fff;
}
.field textarea { height: 88px; resize: vertical; }
.submit {
  width: 122px;
  height: 48px;
  margin-top: 8px;
  border: 2px solid #fff;
  border-radius: 24px;
  font: 500 20px/24px Inter, sans-serif;
  color: #fff;
  background: var(--bright);
}

.offices {
  padding: 64px 68px 112px 69px;
  color: #fff;
  background: var(--orange);
}
.office-lists {
  display: flex;
  justify-content: space-between;
  align-items: center;
  padding: 0 10%;
  margin-bottom: 48px;
}
.office-group { display: flex; align-items: center; gap: 16px; }
.office-group h2 { margin: 0; font-size: 17px; font-weight: 400; }
.office-group ul { padding: 32px 0 32px 16px; border-left: 2px solid #fff; }

.map-card { overflow: hidden; border-radius: 32px; background: var(--navy); }
.map-head { display: flex; align-items: center; gap: 24px; padding: 23px 24px; font-size: 16px; }
.map-mark { width: 48px; height: 45px; }
.map-body { position: relative; }
.map { width: 100%; height: auto; }

.border path { fill: none; stroke: #6f7a76; stroke-width: .7; vector-effect: non-scaling-stroke; opacity: .65; }
.border .dash { stroke-dasharray: 2 2; }

.lbl {
  font-family: Roboto, sans-serif;
  font-size: 10px;
  font-weight: 700;
  text-anchor: middle;
  dominant-baseline: central;
  fill: #111;
  stroke: rgba(255, 255, 255, .75);
  stroke-width: 2px;
  stroke-linejoin: round;
  paint-order: stroke;
}
.from-left { text-anchor: start; }
.lbl.region { font-size: 9px; font-weight: 400; fill: #555; }
.lbl.water { font-size: 9px; font-weight: 400; fill: #1f5fc0; stroke: none; }
.lbl.ocean { font-size: 10px; font-weight: 500; letter-spacing: 1px; }
.lbl.city { font-size: 12px; font-weight: 400; fill: #333; }

.locate {
  position: absolute;
  right: 8px;
  bottom: 2px;
  width: 24px;
  height: 25px;
  padding: 4px;
  border: 0;
  border-radius: 6px;
  background: #fff;
}

.footer {
  position: relative;
  display: flex;
  gap: 82px;
  padding: 48px 68px 52px 69px;
  color: #fff;
  background: var(--navy);
}
.brand { width: 124px; }
.footer-logo { width: 128px; height: 43px; overflow: visible; }
.social {
  display: flex;
  flex-direction: column;
  align-items: center;
  gap: 16px;
  padding-top: 30px;
}
.social a { width: 28px; height: 28px; border-radius: 50%; background: #98689a; }

.footer-cols { flex: 1; display: flex; justify-content: space-between; padding-top: 7px; }
.col h3 {
  margin: 0 0 28px;
  padding-bottom: 24px;
  border-bottom: 1px solid #fff;
  font-size: 17px;
  font-weight: 600;
  text-align: center;
}
.col li { margin-bottom: 24px; }

.to-top {
  position: absolute;
  right: 52px;
  bottom: 0;
  display: flex;
  flex-direction: column;
  align-items: center;
  gap: 6px;
  width: 45px;
  height: 57px;
  padding-top: 7px;
  border-radius: 16px 16px 0 0;
  background: #fb840b;
}
.to-top svg { width: 24px; height: 14px; }
```
